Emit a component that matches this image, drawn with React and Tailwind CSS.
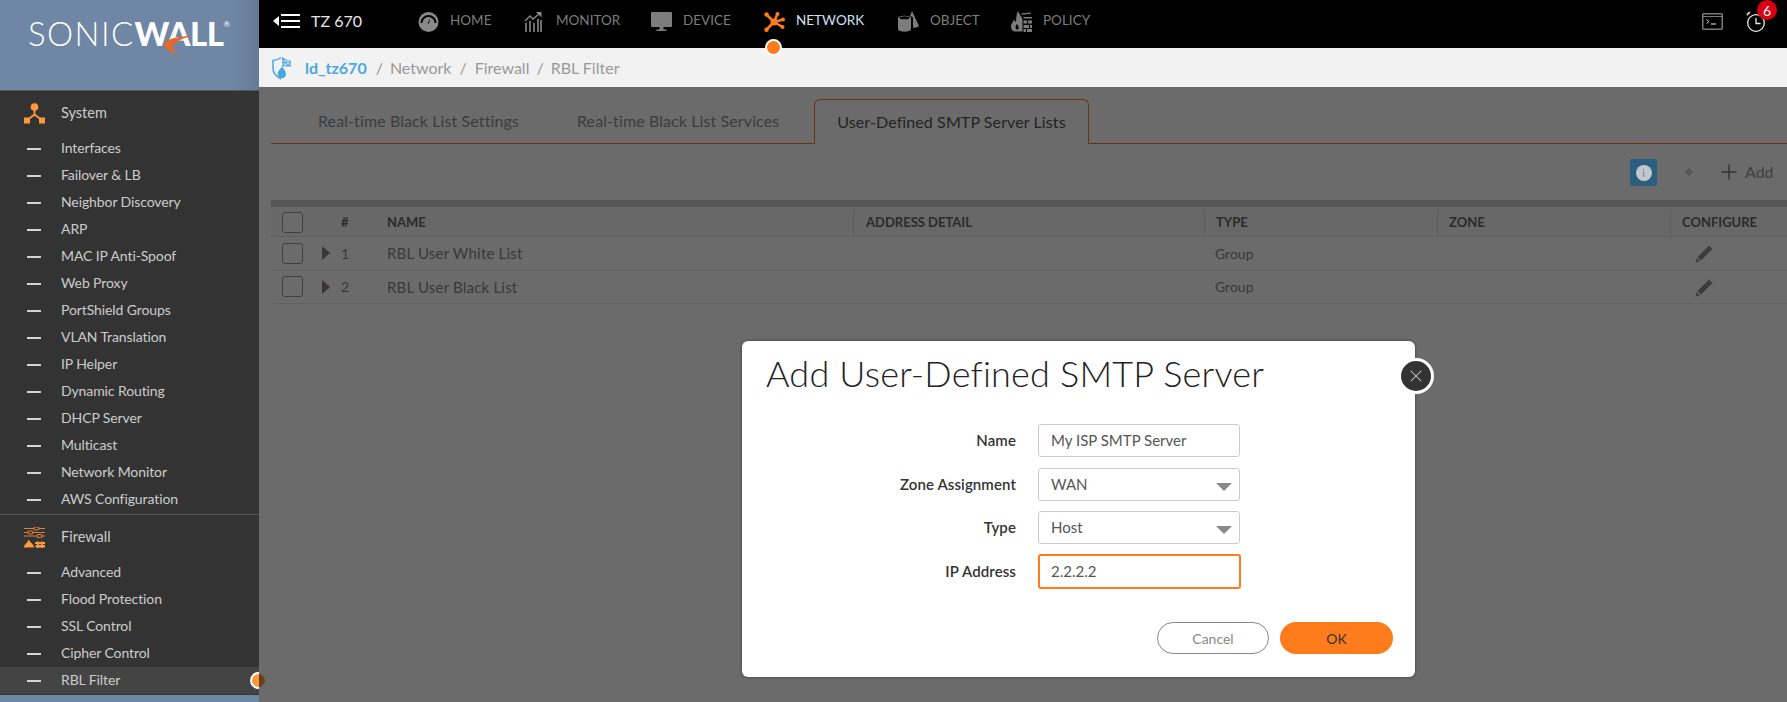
import React from 'react';
import { Plus, X } from 'lucide-react';

const systemItems = [
  'Interfaces', 'Failover & LB', 'Neighbor Discovery', 'ARP', 'MAC IP Anti-Spoof', 'Web Proxy',
  'PortShield Groups', 'VLAN Translation', 'IP Helper', 'Dynamic Routing', 'DHCP Server',
  'Multicast', 'Network Monitor', 'AWS Configuration',
];
const firewallItems = ['Advanced', 'Flood Protection', 'SSL Control', 'Cipher Control', 'RBL Filter'];

const GaugeIcon = () => (
  <svg width="21" height="20" viewBox="0 0 21 20" fill="none">
    <circle cx="10.5" cy="10" r="10" fill="#8a8a8a" />
    <path d="M3.5 11a7 7 0 0 1 14 0" stroke="#000" strokeWidth="2" />
    <path d="M12.5 6l-1.6 5.5h-1.4z" fill="#000" />
  </svg>
);

const MonitorIcon = () => (
  <svg width="18" height="20" viewBox="0 0 18 20" fill="#6f6f6f">
    <path d="M1 11h2v9H1zM5 9h2v11H5zM9 11h2v9H9zM13 7h2v13h-2zM16 8h2v12h-2z" />
    <path d="M1 9l5-5 3 3 6-5" stroke="#8a8a8a" strokeWidth="1.3" fill="none" />
    <path d="M12 0h5.5v5.5z" fill="#8a8a8a" />
  </svg>
);

const DeviceIcon = () => (
  <svg width="21" height="20" viewBox="0 0 21 20" fill="#7d7d7d">
    <rect x="0" y="0" width="21" height="15" rx="1" />
    <path d="M8.5 15h4v2.5h-4zM5.5 17.5h10V19h-10z" />
  </svg>
);

const NetworkIcon = () => (
  <svg width="21" height="20" viewBox="0 0 21 20" fill="#ff7b1c" stroke="#ff7b1c">
    <path d="M2.500 2.500L9.500 9.500M13.500 2L10 10M19 7.500L10 10M18.500 15L10 10M2.500 17.500L10 10" strokeWidth="2.600" />
    <circle cx="10" cy="10" r="3.500" stroke="none" />
    <circle cx="2.500" cy="2.500" r="2.200" stroke="none" />
    <circle cx="13.500" cy="2" r="2" stroke="none" />
    <circle cx="19" cy="7.500" r="2" stroke="none" />
    <circle cx="18.500" cy="15" r="2" stroke="none" />
    <circle cx="2.500" cy="17.800" r="2.200" stroke="none" />
  </svg>
);

const ObjectIcon = () => (
  <svg width="21" height="21" viewBox="0 0 21 21" fill="#7d7d7d">
    <path d="M14 0l7 15c-1.500 1.300-3.500 1.800-6 1.800V6.500c-1-.8-2-1.200-3-1.500z" />
    <path d="M0 7c0-3 13-3 13 0v11c0 3.500-13 3.500-13 0z" />
    <ellipse cx="6.500" cy="6.800" rx="5" ry="1.500" fill="#000" />
  </svg>
);

const PolicyIcon = () => (
  <svg width="21" height="21" viewBox="0 0 21 21" fill="#7d7d7d">
    <path d="M7 0c.5 3 4 5 4.500 9v11.500H5c-3 0-5-2-5-5 0-3 2-4 3-7 .5 1 1 2 2 2.500C5.500 7 5 3 7 0z" />
    <path d="M6 13c-2 2-2 5 0 5.500 2 .3 2.500-2 0-5.500z" fill="#000" />
    <path d="M10 2.500l10-1v1.300l-9 1zM12.500 6H21v1.500h-8.500zM12.500 9.500H21v3h-8.500zM12.500 14H21v3h-8.500zM12.500 18H21v3h-8.500z" />
    <path d="M16 9.500h1v3h-1zM18 14h1v3h-1zM15 18h1v3h-1z" fill="#000" />
  </svg>
);

const ShieldIcon = () => (
  <svg width="20" height="24" viewBox="0 0 20 24" fill="none">
    <path d="M9 1.500C6.500 3.500 4 4.200 1 4.500v8c0 4.500 3.500 8 8 10.500" stroke="#4aa8e0" strokeWidth="1.500" />
    <path d="M10 1c2.500 2 5.500 3 9 3.500v6H10z" fill="#4aa8e0" />
    <path d="M10 5h9M10 8h9M14 1.500v3.500M16 5v3M13 8v3" stroke="#f2f2f2" strokeWidth="0.8" />
    <path d="M10 10.500c2 3 4 4.500 4 7.500a4.200 4.200 0 0 1-8.400 0c0-3 2.400-4.500 4.400-7.500z" fill="#4aa8e0" />
  </svg>
);

const SystemIcon = () => (
  <svg width="21" height="21" viewBox="0 0 21 21" fill="#ff9a3c">
    <circle cx="10.500" cy="4" r="3.800" />
    <rect x="0" y="14.500" width="6" height="6" />
    <rect x="15" y="14.500" width="6" height="6" />
    <path d="M10.500 7v6M10.500 11.500L4 16.500M10.500 11.500L17 16.500" stroke="#ff9a3c" strokeWidth="1.800" fill="none" />
  </svg>
);

const FirewallIcon = () => (
  <svg width="21" height="21" viewBox="0 0 21 21" fill="none" stroke="#d9803a" strokeWidth="1.200">
    <path d="M0 1.500h10M15 1.500h6M0 5.500h4M9 5.500h12M0 9h13M18 9h3" />
    <rect x="10" y="0" width="5" height="3" rx="1.500" />
    <rect x="4" y="4" width="5" height="3" rx="1.500" />
    <rect x="13" y="7.500" width="5" height="3" rx="1.500" />
    <path d="M0 20.500c0-3.500 3-3.500 4.500-8C6 15.500 10 17 10 20.500H0z" fill="#ff9a3c" stroke="none" />
    <path d="M11 15h10v2h-10zM11.500 18h9.500v2.500h-9.500z" fill="#ff9a3c" stroke="none" />
    <path d="M14 14.500v6.500M18 14.500v6.500" stroke="#ff9a3c" strokeWidth="1.800" />
  </svg>
);

const TerminalIcon = () => (
  <svg width="21" height="17" viewBox="0 0 21 17" fill="none" stroke="#7a7a7a">
    <rect x="0.750" y="0.750" width="19.500" height="15.500" rx="1" strokeWidth="1.500" />
    <path d="M1 3.500h19" strokeWidth="1" />
    <path d="M4.500 6.500l2.500 2-2.500 2" stroke="#c9c9c9" strokeWidth="1" />
    <path d="M9 11h5" stroke="#c9c9c9" strokeWidth="1.200" />
  </svg>
);

const ClockIcon = () => (
  <svg width="20" height="21" viewBox="0 0 20 21" fill="none" stroke="#e8e8e8" strokeWidth="1.300">
    <circle cx="10" cy="12" r="8.300" />
    <path d="M10 7v5.500h4.500" />
    <path d="M1 5l3.500-3.500L3 0.500 0.500 3z" fill="#d8d8d8" stroke="none" />
  </svg>
);

const PencilIcon = () => (
  <svg width="18" height="18" viewBox="0 0 18 18" fill="#8f8f8f">
    <path d="M14 0.500l3.500 3.500L6 15.500 2.500 12z" />
    <path d="M1.800 13l3.200 3.200L0.500 17.500z" />
  </svg>
);

const Swoosh = () => (
  <svg className="absolute left-[163px] top-[35px]" width="30" height="21" viewBox="0 0 30 21">
    <path d="M29 1C17 1 5 3 1 9c-1 3 6 8 15 11.500C11 16 8 12 11 9c3-3 10-6 18-8z" fill="#e8682a" />
  </svg>
);

const SideRow = ({ label, active }) => (
  <div className={`relative flex h-[27px] items-center ${active ? 'bg-[#444444]' : ''}`}>
    <span className="ml-[27px] h-[2px] w-[14px] bg-[#d4d4d4]" />
    <span className="-mt-[2px] ml-[20px] text-[14px] tracking-[-0.1px] text-[#cccccc]">{label}</span>
    {active && (
      <span className="absolute left-[250px] top-[5px] h-[17px] w-[17px] rounded-full border-2 border-white bg-[#ff9a3c]" />
    )}
  </div>
);

const NavItem = ({ icon, label, active, left }) => (
  <div className={`absolute top-[11px] flex h-[21px] items-center ${left}`}>
    <span className="flex w-[32px]">{icon}</span>
    <span className={`-mt-[2px] text-[13.500px] ${active ? 'text-[#cfe4f5]' : 'text-[#7d7d7d]'}`}>{label}</span>
  </div>
);

const gridCols = 'grid grid-cols-[60px_44px_478px_351px_233px_233px_1fr]';

const CheckBox = () => <span className="h-[21px] w-[21px] rounded-[3px] border border-[#999999] bg-white" />;

const TableRow = ({ num, name }) => (
  <div className={`${gridCols} h-[33.500px] items-center border-b border-[#e8e8e8] text-[14px] text-[#888888]`}>
    <div className="flex items-center justify-between pl-[11px] pr-[1px]">
      <CheckBox />
      <span className="h-0 w-0 border-y-[7px] border-l-[8px] border-y-transparent border-l-[#8a8070]" />
    </div>
    <div className="pl-[10px]">{num}</div>
    <div className="pl-[12px] text-[15px] tracking-[0.2px]">{name}</div>
    <div />
    <div className="pl-[11px]">Group</div>
    <div />
    <div className="pl-[25px] pt-[2px]"><PencilIcon /></div>
  </div>
);

const HeadCell = ({ children, sep, pad }) => (
  <div className={`flex h-full items-center ${pad} ${sep ? 'border-l border-[#dddddd]' : ''}`}>{children}</div>
);

const FormRow = ({ label, children, h }) => (
  <div className={`flex items-center ${h}`}>
    <div className="w-[274px] text-right text-[15px] font-semibold tracking-[0.1px] text-[#333333]">{label}</div>
    <div className="ml-[22px]">{children}</div>
  </div>
);

const Field = ({ value, caret }) => (
  <div className="relative flex h-[33px] w-[202px] items-center rounded-[3px] border border-[#cccccc] pl-[12px] text-[15px] text-[#555555]">
    {value}
    {caret && (
      <span className="absolute left-[177px] top-[14px] h-0 w-0 border-x-[8px] border-t-[8px] border-x-transparent border-t-[#888888]" />
    )}
  </div>
);

export default function App() {
  return (
    <div className="relative flex h-[702px] w-full overflow-hidden bg-white [font-family:Lato,sans-serif]">
      {/* Left menu */}
      <aside className="relative z-0 flex h-full w-[259px] shrink-0 flex-col bg-[#333333]">
        <div className="relative h-[91px] border-b border-[#555555] bg-gradient-to-r from-[#6f87a5] from-90% to-[#647a96]">
          <div className="absolute left-[28px] top-[14px] flex items-start text-[33px] leading-[38px] text-white">
            <span className="font-light tracking-[1.4px]">SONIC</span>
            <span className="font-black tracking-[-0.500px]">WALL</span>
            <span className="mt-[6px] text-[8px] leading-[8px]">®</span>
          </div>
          <Swoosh />
        </div>
        <div className="flex h-[44px] items-center pl-[24px]">
          <SystemIcon />
          <span className="-mt-[1px] ml-[16px] text-[14.500px] text-[#cccccc]">System</span>
        </div>
        {systemItems.map((item) => <SideRow key={item} label={item} />)}
        <div className="mt-[1px] flex h-[45px] items-center border-t border-[#555555] pl-[24px]">
          <FirewallIcon />
          <span className="ml-[16px] text-[14.500px] text-[#cccccc]">Firewall</span>
        </div>
        {firewallItems.map((item) => <SideRow key={item} label={item} active={item === 'RBL Filter'} />)}
        <div className="mt-[1px] flex-1 bg-[#6f87a5]" />
      </aside>

      <div className="relative min-w-0 flex-1">
        {/* Top bar */}
        <header className="relative z-30 h-[48px] bg-black">
          <div className="absolute left-[14px] top-[14px] h-[14px] w-[27px]">
            <span className="absolute left-0 top-[2px] h-0 w-0 border-y-[5px] border-r-[6px] border-y-transparent border-r-white" />
            <span className="absolute left-[8px] top-0 h-[2px] w-[19px] bg-white" />
            <span className="absolute left-[8px] top-[6px] h-[2px] w-[19px] bg-white" />
            <span className="absolute left-[8px] top-[12px] h-[2px] w-[19px] bg-white" />
          </div>
          <span className="absolute left-[52px] top-[10px] text-[16px] leading-[21px] text-[#e6e6e6]">TZ 670</span>
          <NavItem left="left-[159px]" icon={<GaugeIcon />} label="HOME" />
          <NavItem left="left-[265px]" icon={<MonitorIcon />} label="MONITOR" />
          <NavItem left="left-[392px]" icon={<DeviceIcon />} label="DEVICE" />
          <NavItem left="left-[505px]" icon={<NetworkIcon />} label="NETWORK" active />
          <NavItem left="left-[639px]" icon={<ObjectIcon />} label="OBJECT" />
          <NavItem left="left-[752px]" icon={<PolicyIcon />} label="POLICY" />
          <span className="absolute left-[506px] top-[39px] h-[17px] w-[17px] rounded-full border-2 border-white bg-[#ff7b1c]" />
          <span className="absolute left-[1443px] top-[13px]"><TerminalIcon /></span>
          <span className="absolute left-[1487px] top-[11px]"><ClockIcon /></span>
          <span className="absolute left-[1498px] top-0 flex h-[20px] w-[20px] items-center justify-center rounded-full bg-[#d90012] text-[14px] text-white">6</span>
        </header>

        {/* Breadcrumb */}
        <div className="relative z-20 flex h-[39px] items-center bg-[#f2f2f2] pl-[13px] text-[16px] text-[#999999]">
          <ShieldIcon />
          <span className="ml-[13px] font-bold text-[#4aa8e0]">ld_tz670</span>
          <span className="ml-[9px]">/</span>
          <span className="ml-[7px]">Network</span>
          <span className="ml-[8px]">/</span>
          <span className="ml-[8px]">Firewall</span>
          <span className="ml-[7px]">/</span>
          <span className="ml-[7px]">RBL Filter</span>
        </div>

        {/* Page under the dimming layer */}
        <main className="relative h-[615px] pl-[12px]">
          <div className="flex h-[57px] items-end border-b border-[#ff7b1c] text-[16px] tracking-[0.1px]">
            <div className="mb-[10px] ml-[47px] w-[259px] text-[#909090]">Real-time Black List Settings</div>
            <div className="mb-[10px] w-[237px] text-[#909090]">Real-time Black List Services</div>
            <div className="relative -mb-px flex h-[45px] w-[275px] items-center justify-center rounded-t-[6px] border border-b-white border-[#ff7b1c] bg-white text-[#555555]">
              User-Defined SMTP Server Lists
            </div>
          </div>
          <div className="relative h-[56px]">
            <span className="absolute left-[1415px] top-[25px] h-[6px] w-[6px] rotate-45 bg-[#cccccc]" />
            <span className="absolute left-[1446px] top-[16px] text-[#777777]"><Plus size={24} strokeWidth={1.5} /></span>
            <span className="absolute left-[1474px] top-[16px] text-[16px] leading-[24px] text-[#999999]">Add</span>
          </div>
          <div className="h-[7px] bg-[#cfcfcf]" />
          <div className={`${gridCols} h-[30px] items-center border-b border-[#e4e4e4] bg-[#f7f7f7] pt-[2px] text-[13px] font-bold text-[#666666]`}>
            <HeadCell pad="pl-[11px]"><CheckBox /></HeadCell>
            <HeadCell pad="pl-[10px]">#</HeadCell>
            <HeadCell pad="pl-[12px]">NAME</HeadCell>
            <HeadCell sep pad="pl-[12px]">ADDRESS DETAIL</HeadCell>
            <HeadCell sep pad="pl-[11px]">TYPE</HeadCell>
            <HeadCell sep pad="pl-[11px]">ZONE</HeadCell>
            <HeadCell sep pad="pl-[11px]">CONFIGURE</HeadCell>
          </div>
          <TableRow num="1" name="RBL User White List" />
          <TableRow num="2" name="RBL User Black List" />
        </main>

        {/* Dimming layer: covers the page, leaves menu and top bars bright */}
        <div className="absolute inset-x-0 bottom-0 top-[87px] z-10 bg-black/[0.58]" />

        {/* Info button sits on top with its dimmed colour */}
        <div className="absolute left-[1371px] top-[159px] z-10 flex h-[27px] w-[27px] items-center justify-center rounded-[2px] bg-[#2a5f80]">
          <span className="flex h-[16px] w-[16px] items-center justify-center rounded-full bg-[#c2c8cc] text-[12px] font-light leading-none text-[#2a5f80]">i</span>
        </div>

        {/* Modal */}
        <div className="absolute left-[483px] top-[341px] z-30 h-[336px] w-[673px] rounded-[6px] bg-white shadow-[0_0_3px_rgba(0,0,0,0.5)]">
          <h1 className="absolute left-[24px] top-[10px] text-[36px] font-light leading-[44px] tracking-[0.18px] text-[#222222]">Add User-Defined SMTP Server</h1>
          <button className="absolute left-[656px] top-[17px] flex h-[36px] w-[36px] items-center justify-center rounded-full border-[3px] border-white bg-[#333333] text-[#cccccc]">
            <X size={20} strokeWidth={1.25} />
          </button>
          <div className="absolute left-0 top-[83px] w-full">
            <div className="flex flex-col gap-[10px]">
              <FormRow label="Name" h="mb-[1px] h-[33px]"><Field value="My ISP SMTP Server" /></FormRow>
              <FormRow label="Zone Assignment" h="h-[33px]"><Field value="WAN" caret /></FormRow>
              <FormRow label="Type" h="h-[33px]"><Field value="Host" caret /></FormRow>
              <FormRow label="IP Address" h="h-[35px]">
                <div className="flex h-[35px] w-[203px] items-center rounded-[3px] border-2 border-[#ff7b1c] pl-[11px] text-[15px] text-[#555555]">2.2.2.2</div>
              </FormRow>
            </div>
          </div>
          <div className="absolute left-[415px] top-[281px] flex gap-[11px]">
            <button className="h-[32px] w-[112px] rounded-full border border-[#888888] bg-white text-[14px] text-[#888888]">Cancel</button>
            <button className="h-[32px] w-[113px] rounded-full bg-[#ff7b1c] text-[14px] text-[#333333]">OK</button>
          </div>
        </div>
      </div>
    </div>
  );
}
